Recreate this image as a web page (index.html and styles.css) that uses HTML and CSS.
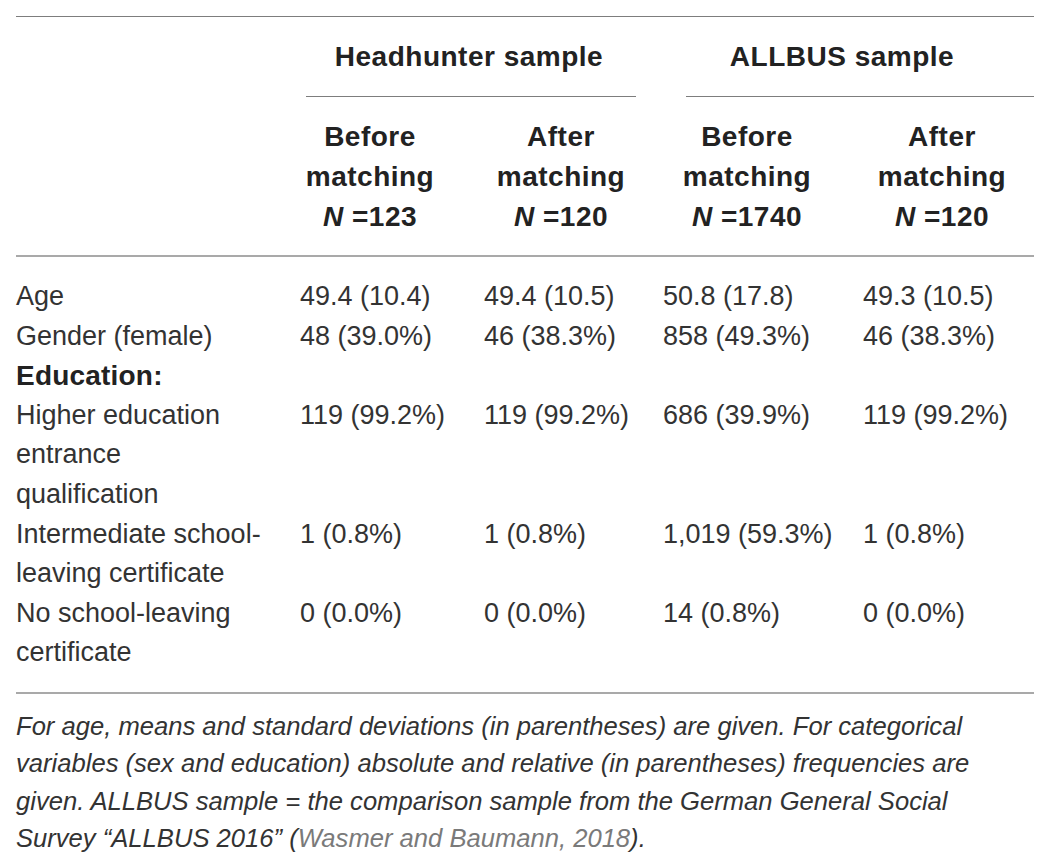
FILE: index.html
```html
<!DOCTYPE html>
<html lang="en">
<head>
<meta charset="utf-8">
<title>Table</title>
<link rel="stylesheet" href="styles.css">
</head>
<body>
<div class="wrap">
  <div class="tbl">
    <div class="cell stub-empty grp-row"></div>
    <div class="cell grp grp-hh">Headhunter sample</div>
    <div class="cell grp grp-al">ALLBUS sample</div>

    <div class="cell sub sub0"></div>
    <div class="cell sub sub1">Before<br>matching<br><i>N</i> =123</div>
    <div class="cell sub sub2">After<br>matching<br><i>N</i> =120</div>
    <div class="cell sub sub3">Before<br>matching<br><i>N</i> =1740</div>
    <div class="cell sub sub4">After<br>matching<br><i>N</i> =120</div>

    <div class="cell stub first">Age</div>
    <div class="cell val first">49.4 (10.4)</div>
    <div class="cell val first">49.4 (10.5)</div>
    <div class="cell val first">50.8 (17.8)</div>
    <div class="cell val first">49.3 (10.5)</div>

    <div class="cell stub">Gender (female)</div>
    <div class="cell val">48 (39.0%)</div>
    <div class="cell val">46 (38.3%)</div>
    <div class="cell val">858 (49.3%)</div>
    <div class="cell val">46 (38.3%)</div>

    <div class="cell stub bold full">Education:</div>

    <div class="cell stub">Higher education entrance qualification</div>
    <div class="cell val">119 (99.2%)</div>
    <div class="cell val">119 (99.2%)</div>
    <div class="cell val">686 (39.9%)</div>
    <div class="cell val">119 (99.2%)</div>

    <div class="cell stub">Intermediate school-leaving certificate</div>
    <div class="cell val">1 (0.8%)</div>
    <div class="cell val">1 (0.8%)</div>
    <div class="cell val">1,019 (59.3%)</div>
    <div class="cell val">1 (0.8%)</div>

    <div class="cell stub last">No school-leaving certificate</div>
    <div class="cell val last">0 (0.0%)</div>
    <div class="cell val last">0 (0.0%)</div>
    <div class="cell val last">14 (0.8%)</div>
    <div class="cell val last">0 (0.0%)</div>
  </div>
  <p class="note">For age, means and standard deviations (in parentheses) are given. For categorical variables (sex and education) absolute and relative (in parentheses) frequencies are given. ALLBUS sample = the comparison sample from the German General Social Survey “ALLBUS 2016” (<span class="ref">Wasmer and Baumann, 2018</span>).</p>
</div>
</body>
</html>
```

FILE: styles.css
```css
html, body {
  margin: 0;
  padding: 0;
  background: #ffffff;
}

body {
  font-family: "Liberation Sans", Arial, sans-serif;
  color: #333333;
}

.wrap {
  width: 1018px;
  margin-left: 16px;
  padding-top: 16px;
}

.tbl {
  display: grid;
  grid-template-columns: 284px 184px 179px 200px 171px;
  border-top: 1px solid #7d7d7d;
  border-bottom: 2px solid #a9a9a9;
  font-size: 27px;
}

.cell {
  min-width: 0;
}

.grp-row {
  height: 79px;
}

.grp {
  height: 79px;
  display: flex;
  align-items: center;
  justify-content: center;
  border-bottom: 1px solid #7d7d7d;
  font-weight: bold;
  font-size: 28px;
  letter-spacing: 0.5px;
  color: #222222;
  grid-column: span 2;
}

.grp-hh {
  margin-left: 6px;
  margin-right: 27px;
  padding-right: 4px;
}

.grp-al {
  margin-left: 23px;
  padding-right: 36px;
}

.sub {
  padding: 20px 0 18px;
  line-height: 40px;
  text-align: center;
  font-weight: bold;
  font-size: 28px;
  letter-spacing: 0.5px;
  color: #222222;
  border-bottom: 2px solid #a9a9a9;
}

.sub i {
  font-style: italic;
}

.sub1 { padding-right: 44px; }
.sub2 { padding-right: 25px; }
.sub3 { padding-right: 32px; }
.sub4 { padding-right: 13px; }

.stub,
.val {
  line-height: 39.6px;
}

.stub {
  padding-right: 34px;
}

.val {
  white-space: nowrap;
}

.first {
  padding-top: 20px;
}

.last {
  padding-bottom: 19px;
}

.bold {
  font-weight: bold;
  font-size: 28px;
  letter-spacing: 0.2px;
  color: #222222;
}

.full {
  grid-column: 1 / -1;
}

.note {
  margin: 0;
  padding-top: 14px;
  font-style: italic;
  font-size: 25.6px;
  line-height: 37.5px;
  color: #333333;
}

.ref {
  color: #7a7a7a;
}
```
